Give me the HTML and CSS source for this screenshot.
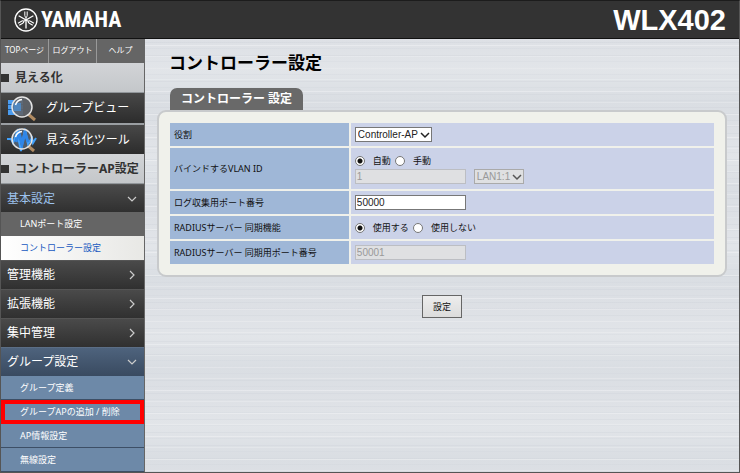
FILE: index.html
```html
<!DOCTYPE html>
<html lang="ja">
<head>
<meta charset="utf-8">
<title>コントローラー設定</title>
<link rel="stylesheet" href="styles.css">
</head>
<body>
<header class="header">
  <div class="brand">
    <svg class="brand-mark" viewBox="0 0 24 24" aria-hidden="true">
      <circle cx="12" cy="12" r="11" fill="none" stroke="#fff" stroke-width="1.3"/>
      <g id="fork" fill="none" stroke="#fff">
        <path d="M12 12V20.500" stroke-width="1.3"/>
        <path d="M10.800 3.500V7.500Q10.800 9 12 9.500Q13.200 9 13.200 7.500V3.500M12 9V12" stroke-width="1"/>
      </g>
      <use href="#fork" transform="rotate(120 12 12)"/>
      <use href="#fork" transform="rotate(240 12 12)"/>
    </svg>
    <span class="brand-name">YAMAHA</span>
  </div>
  <span class="model">WLX402</span>
</header>
<div class="layout">
  <nav class="sidebar">
    <div class="tabs"><a href="#">TOPページ</a><a href="#">ログアウト</a><a href="#">ヘルプ</a></div>
    <h2 class="section">見える化</h2>
    <a class="tool" href="#">
      <svg class="tool-icon" viewBox="0 0 30 28" aria-hidden="true">
        <path d="M1 6H16V21H1Z" fill="#4a9cf0"/>
        <path d="M1 10.500H16M1 15.500H16" stroke="#1f5a99"/>
        <path d="M21 20L28 26" stroke="#b08b62" stroke-width="3"/>
        <circle cx="15" cy="13" r="10" fill="#5f646a" fill-opacity=".9" stroke="#e4e4e4" stroke-width="1.500"/>
        <path d="M6.500 9H14V17H6.500Z" fill="#4a9cf0" opacity=".6"/>
        <path d="M8.500 11Q10 6 15 5.500" fill="none" stroke="#fff" stroke-width="1.500"/>
      </svg>
      グループビュー
    </a>
    <a class="tool" href="#">
      <svg class="tool-icon" viewBox="0 0 30 28" aria-hidden="true">
        <path d="M20 19L27 25" stroke="#b08b62" stroke-width="3"/>
        <circle cx="15" cy="13" r="10" fill="#4f5c6b"/>
        <path d="M0 13H4L6 17L10 6L14 25L18 3L21 18L25 12L26 17L29 12" fill="none" stroke="#41a0fa" stroke-width="2"/>
        <path d="M9 16L12 7L15 18L18 7L21 16" fill="none" stroke="#2f86e8" stroke-width="3"/>
        <circle cx="15" cy="13" r="10" fill="none" stroke="#e4e4e4" stroke-width="1.500"/>
        <path d="M8.500 11Q10 6 15 5.500" fill="none" stroke="#fff" stroke-width="1.500"/>
      </svg>
      見える化ツール
    </a>
    <h2 class="section">コントローラーAP設定</h2>
    <a class="group open" href="#">基本設定<svg class="arrow" viewBox="0 0 10 10" aria-hidden="true"><path d="M1 3L5 7L9 3"/></svg></a>
    <a class="sub" href="#">LANポート設定</a>
    <a class="sub current" href="#">コントローラー設定</a>
    <a class="group" href="#">管理機能<svg class="arrow" viewBox="0 0 10 10" aria-hidden="true"><path d="M3 1L7 5L3 9"/></svg></a>
    <a class="group" href="#">拡張機能<svg class="arrow" viewBox="0 0 10 10" aria-hidden="true"><path d="M3 1L7 5L3 9"/></svg></a>
    <a class="group" href="#">集中管理<svg class="arrow" viewBox="0 0 10 10" aria-hidden="true"><path d="M3 1L7 5L3 9"/></svg></a>
    <a class="group blue" href="#">グループ設定<svg class="arrow" viewBox="0 0 10 10" aria-hidden="true"><path d="M1 3L5 7L9 3"/></svg></a>
    <a class="sub blue" href="#">グループ定義</a>
    <a class="sub blue marked" href="#">グループAPの追加 / 削除</a>
    <a class="sub blue" href="#">AP情報設定</a>
    <a class="sub blue" href="#">無線設定</a>
  </nav>
  <main class="main">
    <h1 class="title">コントローラー設定</h1>
    <form class="form">
      <h2 class="panel-tab">コントローラー 設定</h2>
      <div class="panel">
        <table class="settings">
          <tr>
            <th scope="row"><label for="role">役割</label></th>
            <td><span class="pick"><select id="role"><option>Controller-AP</option></select><svg viewBox="0 0 10 10" aria-hidden="true"><path d="M1 3L5 7L9 3"/></svg></span></td>
          </tr>
          <tr class="tall">
            <th scope="row">バインドするVLAN ID</th>
            <td>
              <div class="choices">
                <label><input type="radio" name="vlan" checked>自動</label>
                <label><input type="radio" name="vlan">手動</label>
              </div>
              <div class="fields">
                <input class="text" type="text" value="1" aria-label="VLAN ID" disabled>
                <span class="pick off"><select aria-label="LANポート" disabled><option>LAN1:1</option></select><svg viewBox="0 0 10 10" aria-hidden="true"><path d="M1 3L5 7L9 3"/></svg></span>
              </div>
            </td>
          </tr>
          <tr>
            <th scope="row"><label for="log-port">ログ収集用ポート番号</label></th>
            <td><input class="text" id="log-port" type="text" value="50000"></td>
          </tr>
          <tr>
            <th scope="row">RADIUSサーバー 同期機能</th>
            <td>
              <div class="choices">
                <label><input type="radio" name="radius" checked>使用する</label>
                <label><input type="radio" name="radius">使用しない</label>
              </div>
            </td>
          </tr>
          <tr>
            <th scope="row"><label for="radius-port">RADIUSサーバー 同期用ポート番号</label></th>
            <td><input class="text" id="radius-port" type="text" value="50001" disabled></td>
          </tr>
        </table>
      </div>
      <button class="submit" type="button">設定</button>
    </form>
  </main>
</div>
</body>
</html>
```
FILE: styles.css
```css
* { box-sizing: border-box; }
html { background: #dfe2e7; }
body {
  margin: 0;
  min-height: 100vh;
  display: flex;
  flex-direction: column;
  border: 1px solid #555;
  border-top-color: #1c1c1c;
  font: 9px/16px "Noto Sans", "Noto Sans CJK JP", sans-serif;
  color: #111;
}
a { color: inherit; text-decoration: none; }
h1, h2 { margin: 0; }

.header {
  height: 38px;
  flex: none;
  display: flex;
  align-items: center;
  justify-content: space-between;
  padding: 0 13px;
  background: #333;
  border-bottom: 1px solid #111;
  color: #fff;
}
.brand { display: flex; align-items: center; gap: 3px; }
.brand-mark { width: 24px; height: 24px; }
.brand-name { font: bold 22px/32px "Liberation Sans Narrow", "Roboto Condensed", sans-serif; }
.model { font: bold 29px/36px "Liberation Sans", sans-serif; }

.layout { flex: 1; display: flex; }
.sidebar {
  width: 144px;
  flex: none;
  background: #333;
  border-right: 1px solid #666;
  color: #fff;
}
.tabs { display: flex; height: 24px; background: #656565; font-size: 8px; line-height: 22px; }
.tabs a { flex: 1; text-align: center; white-space: nowrap; }
.tabs a + a { border-left: 1px solid #999; }
.section {
  display: flex;
  align-items: center;
  gap: 6px;
  height: 30px;
  background: linear-gradient(#d2d4d7, #c4c7ca);
  border-bottom: 1px solid #92979b;
  color: #333;
  font-size: 12px;
}
.section::before { content: ""; width: 8px; height: 8px; background: #333; }
.tool {
  display: flex;
  align-items: center;
  gap: 9px;
  height: 30px;
  padding-left: 6px;
  background: linear-gradient(#484848, #2c2c2c);
  font-size: 12px;
}
.tool + .tool { height: 31px; border-top: 2px solid #9a9ea2; }
.tool-icon { width: 30px; height: 28px; }
.group {
  display: flex;
  align-items: center;
  justify-content: space-between;
  height: 29px;
  padding: 0 7px 0 6px;
  background: linear-gradient(#4a4a4a, #303030);
  border-top: 1px solid #555;
  font-size: 12px;
}
.group.open { height: 28px; color: #9cc2ee; }
.group.blue { background: linear-gradient(#4e637d, #394a60); border-top-color: #5b6e86; }
.arrow { width: 10px; height: 10px; fill: none; stroke: #ccc; stroke-width: 1.2; }
.sub {
  display: flex;
  align-items: center;
  height: 24px;
  padding-left: 19px;
  background: #656565;
}
.sub.current { background: linear-gradient(90deg, #fff, #e8e8e5); color: #1859c0; }
.sub.blue { background: #6d89a8; border-bottom: 1px solid #3d4f66; }
.sub.marked { outline: 4px solid #f00; outline-offset: -4px; }

.main {
  flex: 1;
  min-width: 0;
  padding: 12px 12px;
  background:
    repeating-linear-gradient(#fff0 0 6px, #ffffff4d 6px 7px, #fff0 7px 17px, #ffffff33 17px 18px, #fff0 18px 23px),
    repeating-linear-gradient(#fff0 0 3px, #c7ccd440 3px 4px, #fff0 4px 9px, #cbd0d833 9px 10px, #fff0 10px 13px),
    repeating-linear-gradient(#dde0e5, #e2e5e9 30px, #dadee3 61px, #dde0e5 89px);
}
.title { padding-left: 12px; font-size: 17px; line-height: 24px; color: #000; }
.form { display: flex; flex-direction: column; align-items: flex-start; padding-top: 13px; }
.panel-tab {
  margin-left: 13px;
  padding: 0 11px;
  border-radius: 7px 7px 0 0;
  background: #696969;
  color: #fff;
  font-size: 12px;
  line-height: 22px;
}
.panel {
  width: 100%;
  padding: 9px 9px 9px;
  border: 2px solid #c8cacc;
  border-radius: 9px;
  background: #f0f1eb;
}
.settings { width: 100%; border-spacing: 2px; table-layout: fixed; }
.settings th, .settings td { height: 23px; padding: 0 4px; text-align: left; vertical-align: middle; }
.settings th { width: 33%; background: #9fb7d7; font-weight: normal; }
.settings td { background: #cbd2e8; }
.settings .tall > * { height: 41px; }
.choices { display: flex; gap: 4px; }
.choices label { display: flex; align-items: center; gap: 8px; }
.choices input {
  appearance: none;
  width: 10px;
  height: 10px;
  margin: 0;
  border: 1px solid #777;
  border-radius: 50%;
  background: #fff;
}
.choices input:checked { background: radial-gradient(circle, #111 0 2px, #fff 3px); }
.fields { display: flex; align-items: center; gap: 8px; }
.text, .pick select { font: 10px/12px "Liberation Sans", sans-serif; color: #222; }
.text {
  display: block;
  width: 111px;
  height: 15px;
  padding: 0 1px;
  border: 1px solid #777;
  background: #fff;
}
.text:disabled { background: #dfe0e2; border-color: #bcbec3; color: #999; }
.pick { position: relative; display: block; width: max-content; }
.pick select {
  appearance: none;
  display: block;
  height: 15px;
  margin: 0;
  padding: 0 12px 0 2px;
  border: 1px solid #777;
  border-radius: 0;
  background: #fff;
}
.pick svg {
  position: absolute;
  right: 2px;
  top: 3px;
  width: 10px;
  height: 10px;
  fill: none;
  stroke: #222;
  stroke-width: 1.5;
  pointer-events: none;
}
.pick.off select { background: #dfe0e2; border-color: #aaa; color: #999; opacity: 1; }
.pick.off svg { stroke: #555; }
.submit {
  align-self: center;
  margin-top: 18px;
  width: 40px;
  height: 23px;
  padding: 0;
  border: 1px solid #666;
  background: linear-gradient(#ededed, #dcdcdc);
  color: #111;
  font: inherit;
}
```
